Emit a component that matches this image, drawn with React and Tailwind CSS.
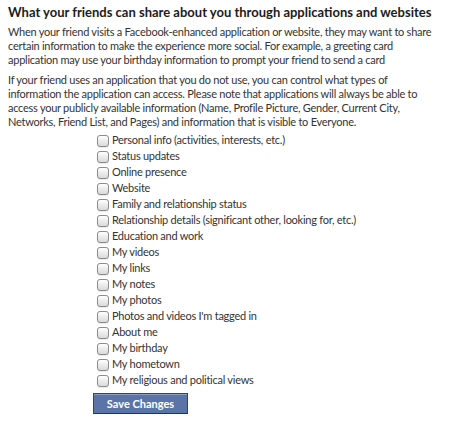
import React, { useState } from 'react';

const opciones = [
  'Personal info (activities, interests, etc.)',
  'Status updates',
  'Online presence',
  'Website',
  'Family and relationship status',
  'Relationship details (significant other, looking for, etc.)',
  'Education and work',
  'My videos',
  'My links',
  'My notes',
  'My photos',
  "Photos and videos I'm tagged in",
  'About me',
  'My birthday',
  'My hometown',
  'My religious and political views',
];

function Casilla({ marcada, onClick }) {
  return (
    <span
      onClick={onClick}
      className="w-[12px] h-[12px] mt-[1px] shrink-0 rounded-[3px] border border-[#8c8c8c] bg-gradient-to-b from-white to-[#d9d9d9] shadow-[0_1px_0_rgba(0,0,0,0.08)] flex items-center justify-center text-[9px] leading-none text-[#333]"
    >
      {marcada ? '✓' : ''}
    </span>
  );
}

export default function App() {
  const [marcadas, setMarcadas] = useState({});

  return (
    <div className="w-[450px] h-[426px] bg-white px-[8px] pt-[3px] text-[#333] text-[11px] leading-[14px] tracking-[-0.25px] font-['Lato',sans-serif]">
      <h2 className="text-[13px] leading-[18px] tracking-normal font-bold text-[#1c1c1c] whitespace-nowrap">
        What your friends can share about you through applications and websites
      </h2>

      <p className="mt-[4px] whitespace-nowrap">
        When your friend visits a Facebook-enhanced application or website, they may want to share
        <br />
        certain information to make the experience more social. For example, a greeting card
        <br />
        application may use your birthday information to prompt your friend to send a card
      </p>

      <p className="mt-[6px] whitespace-nowrap">
        If your friend uses an application that you do not use, you can control what types of
        <br />
        information the application can access. Please note that applications will always be able to
        <br />
        access your publicly available information (Name, Profile Picture, Gender, Current City,
        <br />
        Networks, Friend List, and Pages) and information that is visible to Everyone.
      </p>

      <div className="ml-[85px] mt-[3px] flex flex-col items-start">
        {opciones.map((o, i) => (
          <label key={o} className="flex items-center gap-[3px] h-[16px] pl-[4px] cursor-pointer whitespace-nowrap">
            <Casilla
              marcada={!!marcadas[i]}
              onClick={() => setMarcadas((m) => ({ ...m, [i]: !m[i] }))}
            />
            <span>{o}</span>
          </label>
        ))}

        <button
          type="button"
          className="mt-[5px] w-[95px] h-[21px] bg-[#5b74a8] border border-[#29447e] border-b-[#1a356e] text-white font-bold text-[11px] leading-none tracking-normal shadow-[inset_0_1px_0_#8a9cc2]"
        >
          Save Changes
        </button>
      </div>
    </div>
  );
}
